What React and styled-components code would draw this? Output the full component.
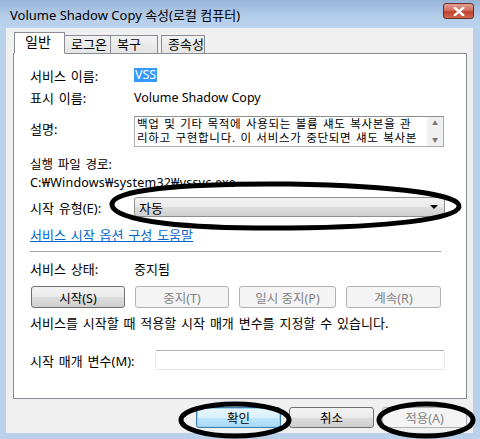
import styled, { createGlobalStyle, css } from "styled-components"

const GlobalStyle = createGlobalStyle`
    html, body {
        margin: 0;
        padding: 0;
        background: #b9d1ea;
    }
    body {
        font-family: "Segoe UI", "Noto Sans", "Noto Sans CJK KR", sans-serif;
        font-size: 12px;
        color: #000;
    }
`

export default function App() {
    return (
        <Window>
            <GlobalStyle />
            <TitleBar>
                <Title>Volume Shadow Copy 속성(로컬 컴퓨터)</Title>
                <CloseButton>
                    <svg width="14" height="9" viewBox="0 0 14 9">
                        <path d="M3 1 L11 8 M11 1 L3 8" stroke="#fff" strokeWidth="2.4" strokeLinecap="square" />
                    </svg>
                </CloseButton>
            </TitleBar>

            <Body>
                <TabRow>
                    <Tab active w={51}>일반</Tab>
                    <Tab w={46}>로그온</Tab>
                    <Tab w={47}>복구</Tab>
                    <Tab w={44} gap>종속성</Tab>
                </TabRow>

                <Panel>
                    <Row h={22}>
                        <Label>서비스 이름:</Label>
                        <Selected>VSS</Selected>
                    </Row>
                    <Row h={22}>
                        <Label>표시 이름:</Label>
                        <Latin>Volume Shadow Copy</Latin>
                    </Row>
                    <Row top mt={8}>
                        <Label pt={3}>설명:</Label>
                        <TextBox>
                            <TextLines>
                                <div>백업 및 기타 목적에 사용되는 볼륨 섀도 복사본을 관</div>
                                <div>리하고 구현합니다. 이 서비스가 중단되면 섀도 복사본</div>
                            </TextLines>
                            <ScrollBar>
                                <Arrow>▲</Arrow>
                                <Arrow>▼</Arrow>
                            </ScrollBar>
                        </TextBox>
                    </Row>
                    <Line mt={9} h={18} fs={12.5}>실행 파일 경로:</Line>
                    <PathLine>C:₩Windows₩system32₩vssvc.exe</PathLine>
                    <Row mt={6}>
                        <Label>시작 유형(E):</Label>
                        <Combo>
                            <span>자동</span>
                            <ComboArrow />
                        </Combo>
                    </Row>
                    <HelpLink mt={11}>서비스 시작 옵션 구성 도움말</HelpLink>
                    <Separator />
                    <Row h={15} mt={9}>
                        <Label>서비스 상태:</Label>
                        <span>중지됨</span>
                    </Row>
                    <ButtonRow>
                        <Button w={94}>시작(S)</Button>
                        <Button w={94} disabled>중지(T)</Button>
                        <Button w={97} disabled>일시 중지(P)</Button>
                        <Button w={95} disabled>계속(R)</Button>
                    </ButtonRow>
                    <Line mt={8} h={15}>서비스를 시작할 때 적용할 시작 매개 변수를 지정할 수 있습니다.</Line>
                    <Row mt={19}>
                        <Label w={125}>시작 매개 변수(M):</Label>
                        <Input />
                    </Row>
                </Panel>

                <Footer>
                    <Button w={85} h={21} primary>확인</Button>
                    <Button w={85} h={21}>취소</Button>
                    <Button w={85} h={21} disabled>적용(A)</Button>
                </Footer>
            </Body>

            <Marks width="480" height="439" viewBox="0 0 480 439">
                <path
                    d="M112 205 C110 190 180 183 290 184 C400 186 462 195 459 207 C456 219 390 227 290 228 C190 229 114 222 112 205 Z"
                    fill="none" stroke="#000" strokeWidth="5"
                />
                <ellipse cx="235" cy="420" rx="54" ry="16" fill="none" stroke="#000" strokeWidth="5" />
                <ellipse cx="426" cy="420" rx="47" ry="16" fill="none" stroke="#000" strokeWidth="5" />
            </Marks>
        </Window>
    )
}

const Window = styled.div`
    position: relative;
    width: 480px;
    height: 439px;
    overflow: hidden;
    background: #b9d1ea;
    display: flex;
    flex-direction: column;
`
const TitleBar = styled.div`
    height: 28px;
    display: flex;
    align-items: center;
    justify-content: space-between;
    padding: 0 6px 0 10px;
    background: linear-gradient(#98b5d8, #b4cde9 60%, #bcd4ee);
`
const Title = styled.div`
    font-size: 13px;
    color: #000;
    margin-top: 1px;
`
const CloseButton = styled.div`
    width: 31px;
    height: 16px;
    margin-top: -6px;
    box-sizing: border-box;
    border: 1px solid #6a2d28;
    border-radius: 3px;
    background: linear-gradient(#e39d8f, #d1715f 45%, #c24130 55%, #cf6b4d);
    display: flex;
    align-items: center;
    justify-content: center;
`
const Body = styled.div`
    margin: 0 7px 6px 6px;
    flex: 1;
    background: #f0f0f0;
    padding: 4px 6px 0 7px;
    display: flex;
    flex-direction: column;
`
const TabRow = styled.div`
    display: flex;
    align-items: flex-end;
    height: 22px;
    position: relative;
    z-index: 1;
    margin-bottom: -1px;
`
const Tab = styled.div`
    box-sizing: border-box;
    width: ${(p) => p.w}px;
    height: 19px;
    padding-left: 6px;
    border: 1px solid #898c95;
    border-left: none;
    background: linear-gradient(#f2f2f2, #e4e4e4);
    font-size: 13px;
    line-height: 17px;
    ${(p) => p.gap && css`margin-left: 3px; border-left: 1px solid #898c95;`}
    ${(p) => p.active && css`
        height: 22px;
        margin-left: 1px;
        background: #fff;
        border-left: 1px solid #898c95;
        border-bottom-color: #fff;
        font-size: 14px;
        padding-left: 10px;
    `}
`
const Panel = styled.div`
    height: 346px;
    box-sizing: border-box;
    background: #fff;
    border: 1px solid #898c95;
    padding: 10px 0 0 16px;
    display: flex;
    flex-direction: column;
    font-size: 13px;
    word-spacing: 1.5px;
`
const Row = styled.div`
    display: flex;
    align-items: ${(p) => (p.top ? "flex-start" : "center")};
    height: ${(p) => (p.h ? `${p.h}px` : "auto")};
    margin-top: ${(p) => p.mt || 0}px;
`
const Label = styled.div`
    width: ${(p) => p.w || 104}px;
    flex-shrink: 0;
    padding-top: ${(p) => p.pt || 0}px;
`
const Latin = styled.span`
    font-size: 12.5px;
    word-spacing: 0;
`
const Selected = styled.span`
    background: #3399ff;
    color: #fff;
    padding: 0 1px;
    line-height: 14px;
    font-size: 12.5px;
`
const TextBox = styled.div`
    width: 310px;
    height: 31px;
    box-sizing: border-box;
    border: 1px solid #abadb3;
    border-top-color: #8e8f8f;
    display: flex;
    overflow: hidden;
`
const TextLines = styled.div`
    flex: 1;
    padding: 0 0 0 2px;
    font-size: 11.5px;
    line-height: 14px;
    letter-spacing: 0.7px;
    word-spacing: 1px;
    white-space: nowrap;
    overflow: hidden;
`
const ScrollBar = styled.div`
    width: 16px;
    flex-shrink: 0;
    background: #f0f0f0;
    display: flex;
    flex-direction: column;
    justify-content: space-between;
    align-items: center;
`
const Arrow = styled.span`
    font-size: 6px;
    color: #777;
    line-height: 12px;
`
const Line = styled.div`
    margin-top: ${(p) => p.mt}px;
    line-height: ${(p) => p.h}px;
    height: ${(p) => p.h}px;
    font-size: ${(p) => p.fs || 13}px;
`
const PathLine = styled.div`
    font-family: "Segoe UI", "Noto Sans", sans-serif;
    font-size: 12.5px;
    line-height: 17px;
    height: 17px;
    word-spacing: 0;
    letter-spacing: 0.2px;
`
const Combo = styled.div`
    width: 311px;
    height: 20px;
    box-sizing: border-box;
    border: 1px solid #8e8f8f;
    border-radius: 3px;
    background: linear-gradient(#f2f2f2, #ebebeb 50%, #dddddd 51%, #cfcfcf);
    display: flex;
    align-items: center;
    justify-content: space-between;
    padding: 0 6px 0 4px;
    font-size: 13px;
`
const ComboArrow = styled.span`
    width: 0;
    height: 0;
    border-left: 4px solid transparent;
    border-right: 4px solid transparent;
    border-top: 4px solid #000;
`
const HelpLink = styled.a`
    margin-top: ${(p) => p.mt}px;
    color: #0066cc;
    text-decoration: underline;
    line-height: 15px;
    align-self: flex-start;
`
const Separator = styled.div`
    width: 411px;
    height: 1px;
    background: #a0a0a0;
    margin-top: 8px;
`
const ButtonRow = styled.div`
    display: flex;
    gap: 10px;
    margin-top: 10px;
    margin-left: 1px;
    word-spacing: 0;
`
const Button = styled.div`
    width: ${(p) => p.w}px;
    height: ${(p) => p.h || 22}px;
    box-sizing: border-box;
    border: 1px solid #707070;
    border-radius: 3px;
    background: linear-gradient(#f2f2f2, #ebebeb 50%, #dddddd 51%, #cfcfcf);
    display: flex;
    align-items: center;
    justify-content: center;
    font-size: 12.5px;
    ${(p) => p.primary && css`
        border-color: #3c7fb1;
        box-shadow: inset 0 0 0 1px #9ad3f0;
        background: linear-gradient(#eaf6fd, #d9f0fc 50%, #bee6fd 51%, #a7d9f5);
    `}
    ${(p) => p.disabled && css`
        border-color: #adb2b5;
        background: #f4f4f4;
        color: #838383;
    `}
`
const Input = styled.div`
    width: 290px;
    height: 20px;
    box-sizing: border-box;
    border: 1px solid #e3e9ef;
    border-top-color: #abadb3;
    border-radius: 2px;
`
const Footer = styled.div`
    display: flex;
    justify-content: flex-end;
    gap: 8px;
    margin-top: 8px;
`
const Marks = styled.svg`
    position: absolute;
    left: 0;
    top: 0;
    pointer-events: none;
`
